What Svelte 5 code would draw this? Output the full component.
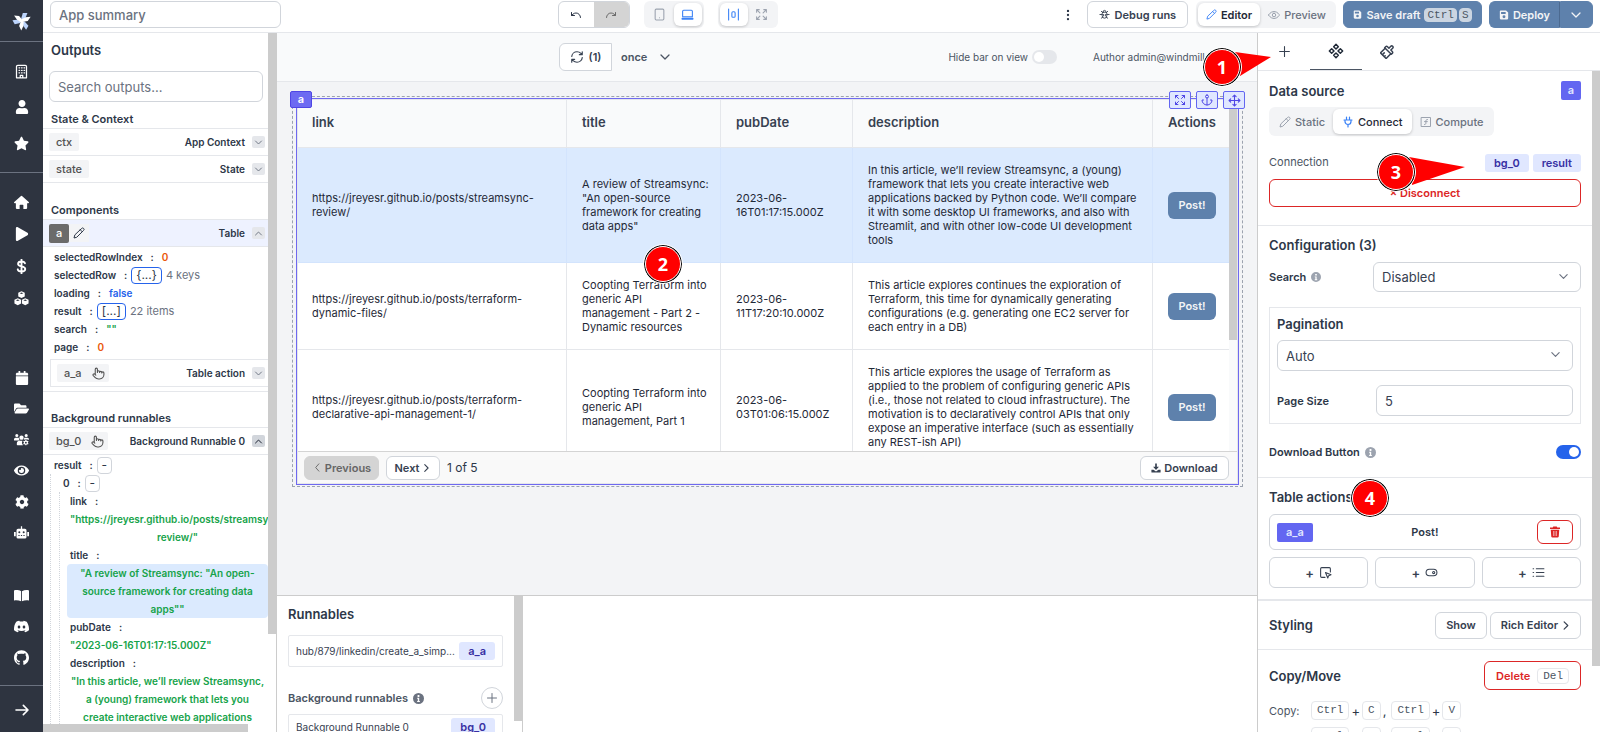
<script>
  const icons = {
    building: { d: 'M6 2h12a2 2 0 0 1 2 2v18h-6v-4h-4v4H4V4a2 2 0 0 1 2-2ZM4 22h16M8 6h1M12 6h1M16 6h1M8 10h1M12 10h1M16 10h1M8 14h1M12 14h1M16 14h1' },
    user: { vb: '0 0 448 512', f: 1, d: 'M224 256c70.7 0 128-57.3 128-128S294.7 0 224 0 96 57.3 96 128s57.3 128 128 128zm89.6 32h-16.7c-22.2 10.2-46.9 16-72.9 16s-50.6-5.8-72.9-16h-16.7C60.2 288 0 348.2 0 422.4V464c0 26.5 21.5 48 48 48h352c26.5 0 48-21.5 48-48v-41.6c0-74.2-60.2-134.4-134.4-134.4z' },
    star: { vb: '0 0 576 512', f: 1, d: 'M259.3 17.8L194 150.2 47.9 171.5c-26.2 3.8-36.7 36.1-17.7 54.6l105.7 103-25 145.5c-4.5 26.3 23.2 46 46.4 33.7L288 439.6l130.7 68.7c23.2 12.2 50.9-7.4 46.4-33.7l-25-145.5 105.7-103c19-18.5 8.5-50.8-17.7-54.6L382 150.2 316.7 17.8c-11.7-23.6-45.6-23.9-57.4 0z' },
    home: { f: 1, d: 'M11.2 1.5a1.2 1.2 0 0 1 1.6 0L23.6 11a1.2 1.2 0 0 1-.9 2.1H21v7.6a1.8 1.8 0 0 1-1.8 1.8H15v-6a1 1 0 0 0-1-1h-4a1 1 0 0 0-1 1v6H4.8A1.8 1.8 0 0 1 3 20.7v-7.6H1.3A1.2 1.2 0 0 1 .4 11Z' },
    play: { vb: '0 0 448 512', f: 1, d: 'M424.4 214.7L72.4 6.6C43.8-10.3 0 6.1 0 47.9V464c0 37.5 40.7 60.1 72.4 41.3l352-208c31.4-18.5 31.5-64.1 0-82.6z' },
    dollar: { w: 3, d: 'M12 1v22M17.5 7c-.4-2-2.5-3-5.5-3-3.2 0-5.5 1.3-5.5 4 0 5.2 11.5 2.6 11.5 8 0 2.8-2.6 4-6 4-3.4 0-5.7-1.3-6-3.5' },
    cubes: { f: 1, d: 'M12 .5l5.2 2.3v6L12 11.3 6.8 8.8v-6ZM12 2.3 9 3.6l3 1.3 3-1.3ZM6 11.5l5.3 2.4v6.2L6 22.7.7 20.1v-6.2ZM6 13.4l-3 1.3 3 1.3 3-1.3ZM18 11.5l5.3 2.4v6.2L18 22.7l-5.3-2.6v-6.2ZM18 13.4l-3 1.3 3 1.3 3-1.3Z' },
    calendar: { vb: '0 0 448 512', f: 1, d: 'M12 192h424c6.6 0 12 5.4 12 12v260c0 26.5-21.5 48-48 48H48c-26.5 0-48-21.5-48-48V204c0-6.6 5.4-12 12-12zm436-44v-36c0-26.5-21.5-48-48-48h-48V12c0-6.6-5.4-12-12-12h-40c-6.6 0-12 5.4-12 12v52H160V12c0-6.6-5.4-12-12-12h-40c-6.6 0-12 5.4-12 12v52H48C21.5 64 0 85.5 0 112v36c0 6.6 5.4 12 12 12h424c6.6 0 12-5.4 12-12z' },
    folder: { vb: '0 0 576 512', f: 1, d: 'M572.694 292.093L500.27 416.248A63.997 63.997 0 0 1 444.989 448H45.025c-18.523 0-30.064-20.093-20.731-36.093l72.424-124.155A64 64 0 0 1 152 256h399.964c18.523 0 30.064 20.093 20.73 36.093zM152 224h328v-48c0-26.51-21.49-48-48-48H272l-64-64H48C21.49 64 0 85.49 0 112v278.046l69.077-118.418C86.214 242.25 117.989 224 152 224z' },
    users: { f: 1, d: 'M4.5 3a2.5 2.5 0 1 1 0 5 2.5 2.5 0 0 1 0-5ZM19.5 3a2.5 2.5 0 1 1 0 5 2.5 2.5 0 0 1 0-5ZM12 5.5a3.5 3.5 0 1 1 0 7 3.5 3.5 0 0 1 0-7ZM2.5 9h4c.5 0 1 .1 1.4.4A5 5 0 0 0 9 13.5H.8A.8.8 0 0 1 0 12.7V11.5A2.5 2.5 0 0 1 2.5 9ZM17.5 9h4A2.5 2.5 0 0 1 24 11.5v1l-5-1-3.2.8c.5-.9.6-1.9.3-2.9.4-.3.9-.4 1.4-.4ZM9 14h4.5a6 6 0 0 0 .8 7H5.5a1 1 0 0 1-1-1v-1.5A4.5 4.5 0 0 1 9 14ZM18.2 12.5h1.6l.3 1.3 1 .6 1.3-.4.8 1.4-1 .9v1.2l1 .9-.8 1.4-1.3-.4-1 .6-.3 1.3h-1.6l-.3-1.3-1-.6-1.3.4-.8-1.4 1-.9v-1.2l-1-.9.8-1.4 1.3.4 1-.6ZM19 15.5a1.5 1.5 0 1 0 0 3 1.5 1.5 0 0 0 0-3Z' },
    eyeSolid: { vb: '0 0 576 512', f: 1, d: 'M572.52 241.4C518.29 135.59 410.93 64 288 64S57.68 135.64 3.48 241.41a32.35 32.35 0 0 0 0 29.19C57.71 376.41 165.07 448 288 448s230.32-71.64 284.52-177.41a32.35 32.35 0 0 0 0-29.19zM288 400a144 144 0 1 1 144-144 143.93 143.93 0 0 1-144 144zm0-240a95.31 95.31 0 0 0-25.31 3.79 47.85 47.85 0 0 1-66.9 66.9A95.78 95.78 0 1 0 288 160z' },
    gear: { vb: '0 0 512 512', f: 1, d: 'M487.4 315.7l-42.6-24.6c4.3-23.2 4.3-47 0-70.2l42.6-24.6c4.9-2.8 7.1-8.6 5.5-14-11.1-35.6-30-67.8-54.7-94.6-3.8-4.1-10-5.1-14.8-2.3L380.8 110c-17.9-15.4-38.5-27.3-60.8-35.1V25.8c0-5.6-3.9-10.5-9.4-11.7-36.7-8.2-74.3-7.8-109.2 0-5.5 1.2-9.4 6.1-9.4 11.7V75c-22.2 7.9-42.8 19.8-60.8 35.1L88.7 85.5c-4.9-2.8-11-1.9-14.8 2.3-24.7 26.7-43.6 58.9-54.7 94.6-1.7 5.4.6 11.2 5.5 14L67.3 221c-4.3 23.2-4.3 47 0 70.2l-42.6 24.6c-4.9 2.8-7.1 8.6-5.5 14 11.1 35.6 30 67.8 54.7 94.6 3.8 4.1 10 5.1 14.8 2.3l42.6-24.6c17.9 15.4 38.5 27.3 60.8 35.1v49.2c0 5.6 3.9 10.5 9.4 11.7 36.7 8.2 74.3 7.8 109.2 0 5.5-1.2 9.4-6.1 9.4-11.7v-49.2c22.2-7.9 42.8-19.8 60.8-35.1l42.6 24.6c4.9 2.8 11 1.9 14.8-2.3 24.7-26.7 43.6-58.9 54.7-94.6 1.5-5.5-.7-11.3-5.6-14.1zM256 336c-44.1 0-80-35.9-80-80s35.9-80 80-80 80 35.9 80 80-35.9 80-80 80z' },
    robot: { f: 1, d: 'M11 2h2v4h4.5A2.5 2.5 0 0 1 20 8.5V19a2.5 2.5 0 0 1-2.5 2.5h-11A2.5 2.5 0 0 1 4 19V8.5A2.5 2.5 0 0 1 6.5 6H11ZM0 11h2.8v7H0ZM21.2 11H24v7h-2.8ZM8.5 10a1.6 1.6 0 1 0 0 3.2 1.6 1.6 0 0 0 0-3.2ZM15.5 10a1.6 1.6 0 1 0 0 3.2 1.6 1.6 0 0 0 0-3.2ZM7 16v1.6h2V16ZM11 16v1.6h2V16ZM15 16v1.6h2V16Z' },
    book: { f: 1, d: 'M.8 3.5C4.5 3 8.5 3.5 11.3 5v16C8.5 19.8 4.5 19.5.8 19.8a.8.8 0 0 1-.8-.8V4.3c0-.4.4-.8.8-.8ZM23.2 3.5C19.5 3 15.5 3.5 12.7 5v16c2.8-1.2 6.8-1.5 10.5-1.2a.8.8 0 0 0 .8-.8V4.3c0-.4-.4-.8-.8-.8Z' },
    discord: { f: 1, d: 'M20.317 4.37a19.791 19.791 0 0 0-4.885-1.515.074.074 0 0 0-.079.037c-.211.375-.445.865-.608 1.25-1.845-.276-3.68-.276-5.487 0-.164-.393-.406-.874-.618-1.25a.077.077 0 0 0-.079-.037 19.736 19.736 0 0 0-4.885 1.515.07.07 0 0 0-.032.028C.533 9.046-.319 13.58.099 18.058a.082.082 0 0 0 .031.056c2.053 1.508 4.041 2.423 5.993 3.029a.078.078 0 0 0 .084-.028c.462-.63.873-1.295 1.226-1.994a.076.076 0 0 0-.042-.106c-.653-.248-1.274-.549-1.872-.892a.077.077 0 0 1-.008-.128c.126-.094.252-.192.372-.291a.074.074 0 0 1 .078-.01c3.928 1.793 8.18 1.793 12.061 0a.074.074 0 0 1 .079.01c.12.099.246.198.373.292a.077.077 0 0 1-.007.128 12.299 12.299 0 0 1-1.873.891.077.077 0 0 0-.041.107c.36.698.772 1.363 1.225 1.993a.076.076 0 0 0 .084.029c1.961-.607 3.95-1.522 6.002-3.029a.077.077 0 0 0 .031-.055c.5-5.177-.838-9.674-3.549-13.66a.061.061 0 0 0-.031-.029zM8.02 15.331c-1.183 0-2.157-1.086-2.157-2.419s.956-2.419 2.157-2.419c1.211 0 2.176 1.095 2.157 2.419 0 1.333-.956 2.419-2.157 2.419zm7.975 0c-1.183 0-2.157-1.086-2.157-2.419s.955-2.419 2.157-2.419c1.211 0 2.176 1.095 2.157 2.419 0 1.333-.946 2.419-2.157 2.419Z' },
    github: { f: 1, d: 'M12 .297c-6.63 0-12 5.373-12 12 0 5.303 3.438 9.8 8.205 11.385.6.113.82-.258.82-.577 0-.285-.01-1.04-.015-2.04-3.338.724-4.042-1.61-4.042-1.61C4.422 18.07 3.633 17.7 3.633 17.7c-1.087-.744.084-.729.084-.729 1.205.084 1.838 1.236 1.838 1.236 1.07 1.835 2.809 1.305 3.495.998.108-.776.417-1.305.76-1.605-2.665-.3-5.466-1.332-5.466-5.93 0-1.31.465-2.38 1.235-3.22-.135-.303-.54-1.523.105-3.176 0 0 1.005-.322 3.3 1.23.96-.267 1.98-.399 3-.405 1.02.006 2.04.138 3 .405 2.28-1.552 3.285-1.23 3.285-1.23.645 1.653.24 2.873.12 3.176.765.84 1.23 1.91 1.23 3.22 0 4.61-2.805 5.625-5.475 5.92.42.36.81 1.096.81 2.22 0 1.606-.015 2.896-.015 3.286 0 .315.21.69.825.57C20.565 22.092 24 17.592 24 12.297c0-6.627-5.373-12-12-12' },
    arrow: { w: 2.4, d: 'M3 12h18M14 5l7 7-7 7' },
    undo: { d: 'M3 7v6h6M21 17a9 9 0 0 0-9-9 9 9 0 0 0-6 2.3L3 13' },
    redo: { d: 'M21 7v6h-6M3 17a9 9 0 0 1 9-9 9 9 0 0 1 6 2.3L21 13' },
    tablet: { d: 'M6 2h12a2 2 0 0 1 2 2v16a2 2 0 0 1-2 2H6a2 2 0 0 1-2-2V4a2 2 0 0 1 2-2ZM12 18h.01' },
    laptop: { d: 'M5 4h14a2 2 0 0 1 2 2v10H3V6a2 2 0 0 1 2-2ZM2 19h20v1.5H2Z' },
    align: { d: 'M11 7h2a2 2 0 0 1 2 2v6a2 2 0 0 1-2 2h-2a2 2 0 0 1-2-2V9a2 2 0 0 1 2-2ZM3 22V2M21 22V2' },
    expand: { d: 'M21 21l-6-6M21 21v-4.8M21 21h-4.8M3 16.2V21h4.8M3 21l6-6M21 7.8V3h-4.8M21 3l-6 6M3 7.8V3h4.8M3 3l6 6' },
    dots: { f: 1, d: 'M12 3a2 2 0 1 1 0 4 2 2 0 0 1 0-4ZM12 10a2 2 0 1 1 0 4 2 2 0 0 1 0-4ZM12 17a2 2 0 1 1 0 4 2 2 0 0 1 0-4Z' },
    bug: { d: 'M9 7h6a2 2 0 0 1 2 2v6a5 5 0 0 1-10 0V9a2 2 0 0 1 2-2ZM9 7V6a3 3 0 0 1 6 0v1M19 5l-3 3M5 5l3 3M19 20l-3-2M5 20l3-2M2 12h5M17 12h5M10 12v3M14 12v3' },
    pencil: { d: 'M17 3a2.85 2.83 0 1 1 4 4L7.5 20.5 2 22l1.5-5.5ZM14.5 5.5l4 4' },
    eye: { d: 'M1 12s4-7 11-7 11 7 11 7-4 7-11 7-11-7-11-7ZM12 8.5a3.5 3.5 0 1 1 0 7 3.5 3.5 0 0 1 0-7Z' },
    save: { f: 1, d: 'M4 1h13l5 5v14a3 3 0 0 1-3 3H5a3 3 0 0 1-3-3V3a2 2 0 0 1 2-2ZM5 4.5v5h11v-5ZM12 12.5a3.5 3.5 0 1 0 0 7 3.5 3.5 0 0 0 0-7Z' },
    down: { d: 'M4 8l8 8 8-8', w: 2.5 },
    up: { d: 'M4 16l8-8 8 8', w: 2.5 },
    left: { d: 'M15 4l-7 8 7 8' },
    right: { d: 'M9 4l8 8-8 8', w: 2.6 },
    refresh: { d: 'M3 11a9 9 0 0 1 9-8 9.75 9.75 0 0 1 6.74 2.74L21 8M21 3v5h-5M21 13a9 9 0 0 1-9 8 9.75 9.75 0 0 1-6.74-2.74L3 16M8 16H3v5' },
    anchor: { d: 'M12 22V8M5 12H2a10 10 0 0 0 20 0h-3M12 2a3 3 0 1 1 0 6 3 3 0 0 1 0-6Z' },
    move: { d: 'M5 9l-3 3 3 3M9 5l3-3 3 3M15 19l-3 3-3-3M19 9l3 3-3 3M2 12h20M12 2v20' },
    plus: { d: 'M12 3v18M3 12h18' },
    component: { d: 'M5.5 8.5 9 12l-3.5 3.5L2 12ZM12 2l3.5 3.5L12 9 8.5 5.5ZM18.5 8.5 22 12l-3.5 3.5L15 12ZM12 15l3.5 3.5L12 22l-3.5-3.5Z', w: 2.2 },
    brush: { d: 'M14 19.9V16h3a2 2 0 0 0 2-2v-2H5v2c0 1.1.9 2 2 2h3v3.9a2 2 0 1 0 4 0ZM6 12V2h12v10M14 2v4M10 2v2', r: 225, w: 2.2 },
    plug: { d: 'M9 2v6M15 2v6M12 17v5M4 8h16M6 8h12v3a6 6 0 1 1-12 0Z', w: 2.4 },
    fn: { d: 'M3 3h18v18H3ZM9 17c2 0 2.8-1 2.8-2.8V10c0-2 1-3.3 3.2-3M9 11.2h5.7' },
    info: { f: 1, d: 'M12 0a12 12 0 1 1 0 24 12 12 0 0 1 0-24ZM10 4.5v4h4v-4ZM9 10.5v2h1.5v5H9v2h6v-2h-1.5v-7Z' },
    trash: { f: 1, d: 'M8.5 1h7l1 2H22v3H2V3h5.5ZM3.5 7.5h17l-1 13.5a2.5 2.5 0 0 1-2.5 2H7a2.5 2.5 0 0 1-2.5-2ZM8 10v10h1V10ZM11.5 10v10h1V10ZM15 10v10h1V10Z' },
    pointerBox: { d: 'M21 11V5a2 2 0 0 0-2-2H5a2 2 0 0 0-2 2v14c0 1.1.9 2 2 2h6M12 12l4.2 10.2 1.6-4.4 4.4-1.6Z' },
    toggle: { d: 'M8 6h8a6 6 0 0 1 0 12H8A6 6 0 0 1 8 6ZM16 10a2 2 0 1 1 0 4 2 2 0 0 1 0-4Z' },
    list: { d: 'M8 5h14M8 12h14M8 19h14M2 5h1M2 12h1M2 19h1' },
    hand: { d: 'M18 11v-1a2 2 0 0 0-4 0M14 10V9a2 2 0 0 0-4 0v1M10 9.5V4a2 2 0 0 0-4 0v10M18 11a2 2 0 1 1 4 0v3a8 8 0 0 1-8 8h-2c-2.8 0-4.5-.86-5.99-2.34l-3.6-3.6a2 2 0 0 1 2.83-2.82L7 15' },
    download: { f: 1, d: 'M10 1h4v8h5l-7 7.5L5 9h5ZM1 16h5l6 4.5L18 16h5v6a1 1 0 0 1-1 1H2a1 1 0 0 1-1-1Z' }
  };
  const nav = [
    ['workspace', [['building', 'Workspace'], ['user', 'User'], ['star', 'Favorites']]],
    ['main', [['home', 'Home'], ['play', 'Runs'], ['dollar', 'Variables'], ['cubes', 'Resources']]],
    ['manage', [['calendar', 'Schedules'], ['folder', 'Folders'], ['users', 'Groups'], ['eyeSolid', 'Audit logs'], ['gear', 'Settings'], ['robot', 'Workers']]],
    ['links', [['book', 'Docs'], ['discord', 'Discord'], ['github', 'GitHub']]]
  ];
  const rows = [
    { link: 'https://jreyesr.github.io/posts/streamsync-review/', title: 'A review of Streamsync: "An open-source framework for creating data apps"', date: '2023-06-16T01:17:15.000Z', desc: 'In this article, we’ll review Streamsync, a (young) framework that lets you create interactive web applications backed by Python code. We’ll compare it with some desktop UI frameworks, and also with Streamlit, and with other low-code UI development tools' },
    { link: 'https://jreyesr.github.io/posts/terraform-dynamic-files/', title: 'Coopting Terraform into generic API management - Part 2 - Dynamic resources', date: '2023-06-11T17:20:10.000Z', desc: 'This article explores continues the exploration of Terraform, this time for dynamically generating configurations (e.g. generating one EC2 server for each entry in a DB)' },
    { link: 'https://jreyesr.github.io/posts/terraform-declarative-api-management-1/', title: 'Coopting Terraform into generic API management, Part 1', date: '2023-06-03T01:06:15.000Z', desc: 'This article explores the usage of Terraform as applied to the problem of configuring generic APIs (i.e., those not related to cloud infrastructure). The motivation is to declaratively control APIs that only expose an imperative interface (such as essentially any REST-ish API)' }
  ];
  let hideBar = $state(false);
  let showDownload = $state(true);
</script>

{#snippet icon(name, size = 12)}
  {@const i = icons[name]}
  <svg class="icon" width={size} height={size} viewBox={i.vb ?? '0 0 24 24'} aria-hidden="true">
    <path d={i.d} fill={i.f ? 'currentColor' : 'none'} fill-rule="evenodd" stroke={i.f ? 'none' : 'currentColor'} stroke-width={i.w ?? 2} stroke-linecap="round" stroke-linejoin="round" transform={i.r ? `rotate(${i.r} 12 12)` : undefined} />
  </svg>
{/snippet}

{#snippet marker(n, cls, pointer)}
  <div class="marker {cls}">
    {#if pointer}<svg class="pointer" width="72" height="40" viewBox="0 0 72 40" aria-hidden="true"><polygon points={pointer} fill="#f00" /></svg>{/if}
    <span>{n}</span>
  </div>
{/snippet}

<div class="app">
  <nav class="side">
    <a class="logo" href="#home" aria-label="Windmill">
      <svg width="20" height="20" viewBox="0 0 24 24" aria-hidden="true">
        {#each [0, 120, 240] as a}
          <path transform="rotate({a} 12 12)" d="M11 9 13 2.5 18.5 2.5 16.5 7.5 12.5 11Z" fill="#bcd4fc" />
        {/each}
        {#each [0, 120, 240] as a}
          <path transform="rotate({a} 12 12)" d="M2.5 5.5 8.5 6 13 11.5 10.5 13.5 6 10.5Z" fill="#fff" />
        {/each}
      </svg>
    </a>
    {#each nav as [group, items]}
      <div class="group {group}">
        {#each items as [name, label]}
          <a href="#{name}" aria-label={label}>{@render icon(name, ['user', 'play', 'calendar', 'gear'].includes(name) ? 14 : 15)}</a>
        {/each}
      </div>
    {/each}
    <div class="group last"><a href="#expand" aria-label="Expand">{@render icon('arrow', 16)}</a></div>
  </nav>

  <div class="shell">
    <header class="top">
      <input class="summary" type="text" placeholder="App summary" aria-label="App summary" />
      <div class="mid">
        <div class="pair">
          <button aria-label="Undo">{@render icon('undo')}</button>
          <button class="off" aria-label="Redo">{@render icon('redo')}</button>
        </div>
        <div class="seg">
          <button aria-label="Mobile">{@render icon('tablet', 13)}</button>
          <button class="on blue" aria-label="Desktop">{@render icon('laptop', 13)}</button>
        </div>
        <div class="seg">
          <button class="on blue" aria-label="Centered">{@render icon('align', 13)}</button>
          <button aria-label="Full width">{@render icon('expand', 13)}</button>
        </div>
      </div>
      <div class="right">
        <button class="more" aria-label="More">{@render icon('dots', 14)}</button>
        <button class="btn debug">{@render icon('bug', 11)}Debug runs</button>
        <div class="seg mode">
          <button class="on"><i class="bluei">{@render icon('pencil', 11)}</i>Editor</button>
          <button><i>{@render icon('eye', 12)}</i>Preview</button>
        </div>
        <button class="btn solid save">{@render icon('save', 9)}Save draft <span class="keys"><kbd>Ctrl</kbd><kbd>S</kbd></span></button>
        <div class="deploy">
          <button class="btn solid">{@render icon('save', 10)}Deploy</button>
          <button class="btn solid" aria-label="Deploy options">{@render icon('down', 12)}</button>
        </div>
      </div>
    </header>

    <div class="panes">
      <aside class="outputs">
        <div class="scroll">
          <h2>Outputs</h2>
          <input class="search" type="text" placeholder="Search outputs..." aria-label="Search outputs" />
          <h3>State &amp; Context</h3>
          <div class="row"><span class="tag">ctx</span><b>App Context</b><button class="chev" aria-label="Expand ctx">{@render icon('down', 9)}</button></div>
          <div class="row"><span class="tag">state</span><b>State</b><button class="chev" aria-label="Expand state">{@render icon('down', 9)}</button></div>
          <h3 class="gap">Components</h3>
          <div class="row selected"><span class="tag dark">a</span><button class="edit" aria-label="Rename a">{@render icon('pencil', 12)}</button><b>Table</b><button class="chev" aria-label="Collapse a">{@render icon('up', 9)}</button></div>
          <div class="tree">
            <p>selectedRowIndex<i>:</i><span class="num">0</span></p>
            <p>selectedRow<i>:</i><button class="fold">{'{...}'}</button><small>4 keys</small></p>
            <p>loading<i>:</i><span class="bool">false</span></p>
            <p>result<i>:</i><button class="fold">[...]</button><small>22 items</small></p>
            <p>search<i>:</i><span class="str">""</span></p>
            <p>page<i>:</i><span class="num">0</span></p>
          </div>
          <div class="sub"><div class="row"><span class="tag wide">a_a {@render icon('hand', 13)}</span><b>Table action</b><button class="chev" aria-label="Expand a_a">{@render icon('down', 9)}</button></div></div>
          <h3 class="bg">Background runnables</h3>
          <div class="row"><span class="tag wide">bg_0 {@render icon('hand', 13)}</span><b>Background Runnable 0</b><button class="chev strong" aria-label="Collapse bg_0">{@render icon('up', 9)}</button></div>
          <div class="tree">
            <p>result<i>:</i><button class="fold dash">-</button></p>
            <div class="lvl">
              <p>0<i>:</i><button class="fold dash">-</button></p>
              <div class="lvl two">
                <p>link<i>:</i></p>
                <p class="str over">"https://jreyesr.github.io/posts/streamsync-<br />review/"</p>
                <p>title<i>:</i></p>
                <p class="str hit">"A review of Streamsync: "An open-source framework for creating data apps""</p>
                <p>pubDate<i>:</i></p>
                <p class="str date">"2023-06-16T01:17:15.000Z"</p>
                <p>description<i>:</i></p>
                <p class="str">"In this article, we’ll review Streamsync, a (young) framework that lets you create interactive web applications</p>
              </div>
            </div>
          </div>
        </div>
        <div class="vbar"></div>
        <div class="hbar"></div>
      </aside>

      <main>
        <section class="canvas">
          <div class="bar">
            <div class="refresh"><button class="btn">{@render icon('refresh', 14)}(1)</button><button class="once">once {@render icon('down', 12)}</button></div>
            <div class="meta">
              <label>Hide bar on view <input class="switch" type="checkbox" bind:checked={hideBar} /></label>
              <span>Author admin@windmill.dev</span>
            </div>
          </div>
          <div class="stage">
            <div class="frame">
              <span class="handle">a</span>
              <div class="tools">
                <button aria-label="Expand">{@render icon('expand', 12)}</button>
                <button aria-label="Anchor">{@render icon('anchor', 12)}</button>
                <button aria-label="Move">{@render icon('move', 13)}</button>
              </div>
              <div class="component">
                <div class="grid">
                  <div class="tablebox">
                    <table>
                      <colgroup><col class="c1" /><col class="c2" /><col class="c3" /><col class="c4" /><col class="c5" /></colgroup>
                      <thead><tr><th>link</th><th>title</th><th>pubDate</th><th>description</th><th>Actions</th></tr></thead>
                      <tbody>
                        {#each rows as r, n}
                          <tr class:active={n === 0}>
                            <td>{r.link}</td><td>{r.title}</td><td>{r.date}</td><td>{r.desc}</td>
                            <td><button class="post">Post!</button></td>
                          </tr>
                        {/each}
                      </tbody>
                    </table>
                  </div>
                  <div class="track"><div></div></div>
                </div>
                <footer>
                  <button class="btn prev" disabled>{@render icon('left', 11)}Previous</button>
                  <button class="btn next">Next{@render icon('right', 10)}</button>
                  <span>1 of 5</span>
                  <button class="btn dl">{@render icon('download', 10)}Download</button>
                </footer>
              </div>
            </div>
          </div>
        </section>
        <section class="bottom">
          <div class="runs">
            <h2>Runnables</h2>
            <button class="item"><span>hub/879/linkedin/create_a_simp...</span><em>a_a</em></button>
            <div class="bghead"><h3>Background runnables</h3>{@render icon('info', 11)}<button aria-label="Add background runnable">{@render icon('plus', 12)}</button></div>
            <button class="item second"><span>Background Runnable 0</span><em>bg_0</em></button>
          </div>
          <div class="runbar"><div></div></div>
        </section>
      </main>

      <aside class="settings">
        <div class="tabs">
          <button aria-label="Insert">{@render icon('plus', 13)}</button>
          <button class="active" aria-label="Settings">{@render icon('component', 16)}</button>
          <button aria-label="Styling">{@render icon('brush', 16)}</button>
        </div>
        <div class="body">
          <div class="props">
            <section>
              <div class="line head"><h2>Data source</h2><span class="id">a</span></div>
              <div class="seg source">
                <button><i>{@render icon('pencil', 12)}</i>Static</button>
                <button class="on"><i class="bluei">{@render icon('plug', 12)}</i>Connect</button>
                <button><i>{@render icon('fn', 12)}</i>Compute</button>
              </div>
              <div class="line conn"><span>Connection</span><div><em>bg_0</em><em>result</em></div></div>
              <button class="btn red">× Disconnect</button>
            </section>
            <section class="config">
              <h2>Configuration (3)</h2>
              <div class="line">
                <label for="search">Search {@render icon('info', 10)}</label>
                <div class="select"><select id="search"><option>Disabled</option></select>{@render icon('down', 11)}</div>
              </div>
              <div class="box">
                <label for="pagination" class="big">Pagination</label>
                <div class="select full"><select id="pagination"><option>Auto</option></select>{@render icon('down', 11)}</div>
                <div class="line"><label for="size">Page Size</label><input id="size" type="text" value="5" /></div>
              </div>
              <div class="line dlrow"><label for="dl">Download Button {@render icon('info', 11)}</label><input id="dl" class="switch" type="checkbox" bind:checked={showDownload} /></div>
            </section>
            <section class="actions">
              <h2>Table actions</h2>
              <div class="action"><span class="id">a_a</span><b>Post!</b><button aria-label="Delete action">{@render icon('trash', 12)}</button></div>
              <div class="adds">
                <button class="btn" aria-label="Add button">+ {@render icon('pointerBox', 13)}</button>
                <button class="btn" aria-label="Add toggle">+ {@render icon('toggle', 13)}</button>
                <button class="btn" aria-label="Add select">+ {@render icon('list', 13)}</button>
              </div>
            </section>
            <section class="styling">
              <h2>Styling</h2>
              <div><button class="btn">Show</button><button class="btn">Rich Editor {@render icon('right', 11)}</button></div>
            </section>
            <section class="copy">
              <div class="line"><h2>Copy/Move</h2><button class="btn red">Delete <kbd>Del</kbd></button></div>
              <p><span>Copy:</span><kbd>Ctrl</kbd>+<kbd>C</kbd>,<kbd class="k2">Ctrl</kbd>+<kbd>V</kbd></p>
              <p><span>Move:</span><kbd>Ctrl</kbd>+<kbd>X</kbd>,<kbd class="k2">Ctrl</kbd>+<kbd>V</kbd></p>
            </section>
          </div>
          <div class="track"><div></div></div>
        </div>
      </aside>
    </div>
  </div>

  {@render marker(1, 'm1', '13,3 49,8 18,27')}
  {@render marker(2, 'm2')}
  {@render marker(3, 'm3', '13,3 69,13 16,31')}
  {@render marker(4, 'm4')}
</div>

<style>
  :global(body) { background: #fff; }
  .app, .app :global(*) { box-sizing: border-box; }
  .app { position: relative; display: flex; height: 100vh; overflow: hidden; font: 11px/14px Inter, "Liberation Sans", sans-serif; color: #2d3748; }
  h2, h3, p { margin: 0; }
  h2 { font-size: 13px; line-height: 18px; font-weight: 600; }
  h3 { font-size: 11px; line-height: 16px; font-weight: 600; }
  i, em { font-style: normal; }
  button, input, select { font: inherit; color: inherit; margin: 0; }
  button { display: inline-flex; align-items: center; justify-content: center; padding: 0; border: 0; background: none; white-space: nowrap; cursor: pointer; }
  .icon { display: block; flex: none; }
  b { font-weight: 600; }
  .btn { gap: 5px; border: 1px solid #d1d5db; border-radius: 6px; background: #fff; font-weight: 600; color: #374151; }

  .side { flex: none; width: 43px; background: #2e3440; color: #fff; display: flex; flex-direction: column; }
  .side a { color: inherit; display: flex; align-items: center; justify-content: center; }
  .logo { height: 42px; border-bottom: 1px solid #6b7280; }
  .group { display: flex; flex-direction: column; }
  .group a { height: 32px; }
  .group.workspace { padding: 11px 0; border-bottom: 1px solid #6b7280; }
  .group.workspace a { height: 36px; }
  .group.main { padding-top: 13px; }
  .group.manage { margin-top: 48px; }
  .group.manage a, .group.links a { height: 31px; }
  .group.links { margin-top: auto; padding-bottom: 12px; }
  .group.last { border-top: 1px solid #6b7280; padding: 8px 0 6px; }

  .shell { flex: 1; min-width: 0; display: flex; flex-direction: column; }
  .top { flex: none; height: 33px; border-bottom: 1px solid #e5e7eb; display: flex; align-items: center; padding: 0 7px 3px; }
  input { outline: 0; }
  .summary { width: 231px; height: 27px; border: 1px solid #d1d5db; border-radius: 6px; padding: 0 8px; font-size: 13px; font-weight: 500; }
  .summary::placeholder, .search::placeholder { color: #6b7280; opacity: 1; }
  .mid { display: flex; gap: 14px; margin: 0 7px 0 auto; }
  .right { display: flex; align-items: center; margin-left: auto; }
  .pair { display: flex; height: 27px; border: 1px solid #d1d5db; border-radius: 6px; overflow: hidden; }
  .pair button { width: 35px; }
  .pair .off { background: #d4d4d4; color: #6b6b6b; }
  .seg { display: flex; align-items: center; padding: 2px; height: 27px; border-radius: 6px; background: #f3f4f6; }
  .seg button { height: 100%; min-width: 28px; gap: 4px; border-radius: 6px; font-weight: 500; color: #6b7280; }
  .seg i, .seg .icon { color: #9ca3af; }
  .seg button.on { background: #fff; box-shadow: 0 1px 3px #0003; color: #1f2937; }
  .seg .blue .icon, .seg .bluei .icon, .seg .bluei { color: #3b82f6; }
  .more { width: 12px; margin-right: 13px; }
  .debug { height: 27px; width: 101px; margin-right: 8px; }
  .mode { margin-right: 7px; }
  .mode button { padding: 0 8px; }
  .mode button.on { font-weight: 600; }
  .btn.solid { height: 27px; gap: 4px; background: #5e81ac; border-color: #5e81ac; color: #f3f4f6; }
  .save { width: 139px; margin-right: 7px; }
  .keys { display: flex; gap: 2px; }
  .keys kbd { background: #cbd5e1; color: #4b5563; border-color: #cbd5e1; height: 14px; line-height: 12px; padding: 0 2px; }
  kbd { display: inline-block; font: 11px/16px "Liberation Mono", monospace; border: 1px solid #e5e7eb; border-radius: 4px; color: #4b5563; background: #fff; }
  .deploy { display: flex; }
  .deploy button:first-child { width: 71px; border-radius: 6px 0 0 6px; border-right-color: #4c6a90; }
  .deploy button:last-child { width: 33px; border-radius: 0 6px 6px 0; }

  .panes { flex: 1; min-height: 0; display: flex; }
  .outputs { flex: none; width: 234px; position: relative; border-right: 1px solid #ccc; overflow: hidden; }
  .scroll { width: 225px; padding-top: 8px; }
  .scroll h2 { padding: 0 8px; }
  .search { display: block; width: calc(100% - 11px); height: 31px; margin: 12px 5px 0 6px; border: 1px solid #d1d5db; border-radius: 6px; padding: 0 8px; font-size: 13px; }
  .scroll h3 { padding: 9px 8px 1px; border-bottom: 1px solid #e5e7eb; }
  .scroll h3.gap { padding-top: 19px; }
  .row { display: flex; align-items: center; height: 27px; padding: 0 3px 0 6px; border-bottom: 1px solid #e5e7eb; }
  .row b { margin-left: auto; font-size: 10px; }
  .row.selected { background: #eef2ff; }
  .tag { height: 18px; padding: 2px 7px; border-radius: 2px; background: #f3f4f6; color: #525252; font-weight: 500; display: flex; align-items: center; }
  .tag.wide { gap: 10px; padding-right: 4px; }
  .tag.dark { background: #6b6b6b; color: #fff; height: 19px; }
  .edit { width: 20px; height: 18px; background: #f3f4f6; }
  .chev { width: 13px; height: 12px; margin-left: 7px; border-radius: 2px; background: #e5e7eb; color: #6b7280; }
  .chev.strong { background: #d1d5db; color: #111827; }
  .tree { padding: 1px 0 3px 11px; font-size: 10px; line-height: 18px; font-weight: 600; }
  .tree p { min-height: 18px; display: flex; align-items: center; }
  .tree p i { margin: 0 8px; }
  .tree .num { color: #ea580c; }
  .tree .bool { color: #2563eb; }
  .tree .str { color: #16a34a; }
  .fold { height: 17px; padding: 0 4px; margin-left: -4px; border: 1px solid #2563eb; border-radius: 4px; font-size: 12px; font-weight: 400; }
  .fold.dash { width: 15px; border-color: #d1d5db; }
  .tree small { font-size: 11px; font-weight: 400; color: #6b7280; margin-left: 4px; }
  .sub { margin-left: 7px; border: 1px solid #e5e7eb; border-right: 0; }
  .sub .row { border: 0; height: 26px; }
  .scroll h3.bg { margin-top: 4px; border-top: 1px solid #e5e7eb; padding-top: 18px; }
  .lvl { margin-left: -4px; padding-left: 12px; border-left: 1px dotted #d1d5db; }
  .lvl.two { padding-left: 7px; }
  .two p { padding: 0 3px; }
  .two p.str { display: block; text-align: center; }
  .two p.over { white-space: nowrap; width: 221px; }
  .two p.date { text-align: left; }
  .two p.hit { background: #dbeafe; border-radius: 4px; }
  .vbar { position: absolute; top: 0; right: 0; width: 8px; height: 86%; background: #ccc; }
  .hbar { position: absolute; left: 0; right: 0; bottom: 0; height: 8px; background: linear-gradient(90deg, #ccc 205px, #fff 205px); }

  main { flex: 1; min-width: 0; display: flex; flex-direction: column; }
  .canvas { flex: 1; background: #f3f4f6; min-height: 0; }
  .bar { height: 49px; background: #f9fafb; border-bottom: 1px solid #e5e7eb; display: flex; align-items: center; color: #4b5563; }
  .refresh { margin: 0 auto 0 282px; display: flex; }
  .refresh .btn { width: 53px; height: 28px; border-radius: 6px 0 0 6px; }
  .once { gap: 12px; padding: 0 9px; font-weight: 600; color: #4b5563; }
  .meta { display: flex; align-items: center; gap: 36px; margin-right: 32px; font-size: 10px; }
  .meta label { display: flex; align-items: center; gap: 4px; }
  .switch { appearance: none; width: 25px; height: 14px; border-radius: 7px; background: #e5e7eb; padding: 2px; display: flex; }
  .switch::before { content: ""; width: 10px; height: 10px; border-radius: 5px; background: #fff; }
  .switch:checked { background: #2563eb; justify-content: flex-end; }
  .stage { padding: 14px 14px 0 15px; }
  .frame { position: relative; border: 1px dashed #9ca3af; padding: 1px 3px; }
  .handle { position: absolute; left: -3px; top: -6px; width: 22px; height: 17px; text-align: center; background: #6d6af2; border: 1px solid #4f46e5; line-height: 15px; border-radius: 2px; color: #fff; font-weight: 600; }
  .tools { position: absolute; right: -3px; top: -6px; display: flex; gap: 5px; }
  .tools button { width: 22px; height: 18px; background: #e0e7ff; border: 1px solid #6366f1; border-radius: 2px; color: #4f46e5; }
  .component { border: 1px solid #6f69f0; background: #e5e7eb; padding: 1px; }
  .grid { display: flex; height: 351px; background: #fff; }
  .tablebox { flex: 1; overflow: hidden; }
  table { width: 100%; border-collapse: separate; border-spacing: 0; table-layout: fixed; color: #1f2937; }
  .c1 { width: 269px; } .c2 { width: 154px; } .c3 { width: 132px; } .c4 { width: 300px; } .c5 { width: 76px; }
  th { height: 48px; padding: 0 10px 3px 15px; text-align: left; font-size: 13px; font-weight: 600; color: #374151; background: #f9fafb; }
  th, td { border-right: 1px solid #e5e7eb; border-bottom: 1px solid #e5e7eb; }
  td { padding: 15px 10px 15px 15px; }
  th:last-child, td:last-child { border-right: 0; padding-right: 0; }
  th:first-child, td:first-child { padding-left: 14px; }
  tr.active td { background: #dbeafe; border-color: #d3e4fd; }
  .post { width: 48px; height: 27px; background: #5e81ac; color: #f3f4f6; border-radius: 6px; font-weight: 600; }
  .grid .track { width: 8px; background: #f9fafb; }
  .grid .track div { height: 240px; background: #ccc; }
  footer { height: 32px; border-top: 1px solid #d4d4d4; background: #f9f9f9; display: flex; align-items: center; gap: 7px; padding: 0 8px 0 6px; }
  footer .btn { height: 24px; }
  footer span { font-size: 12px; }
  .prev { width: 75px; background: #d4d4d4; border-color: #d4d4d4; color: #666; gap: 2px; }
  .next { width: 54px; gap: 2px; }
  .dl { width: 89px; margin-left: auto; gap: 3px; }

  .bottom { height: 137px; flex: none; border-top: 1px solid #ccc; display: flex; overflow: hidden; background: #fff; }
  .runs { width: 237px; padding: 9px 11px; }
  .item { width: 100%; height: 32px; margin-top: 12px; padding: 0 7px; border: 1px solid #e5e7eb; border-radius: 2px; gap: 2px; justify-content: space-between; color: #374151; font-size: 10px; }
  em { padding: 2px 9px; border-radius: 3px; background: #e0e7ff; color: #3730a3; font-weight: 600; font-size: 11px; }
  .bghead { display: flex; align-items: center; gap: 5px; margin-top: 20px; color: #4b5563; }
  .bghead .icon { color: #6b7280; }
  .bghead button { margin-left: auto; width: 22px; height: 22px; border: 1px solid #d1d5db; border-radius: 50%; color: #6b7280; }
  .item.second { margin-top: 5px; height: 26px; }
  .runbar { width: 9px; border-right: 1px solid #ccc; }
  .runbar div { height: 125px; background: #ccc; }

  .settings { flex: none; width: 343px; border-left: 1px solid #ccc; display: flex; flex-direction: column; min-height: 0; }
  .tabs { flex: none; display: flex; height: 38px; border-bottom: 1px solid #e5e7eb; }
  .tabs button { width: 52px; border-bottom: 1px solid transparent; color: #374151; }
  .tabs .active { border-color: #4b5563; color: #1f2937; }
  .body { flex: 1; min-height: 0; display: flex; }
  .props { flex: 1; overflow: hidden; }
  .body .track { width: 8px; }
  .body .track div { background: #ccc; height: 90%; }
  .props section { padding: 0 11px; border-bottom: 1px solid #e5e7eb; }
  .line { display: flex; align-items: center; justify-content: space-between; }
  .head { padding-top: 10px; }
  .id { background: #6366f1; color: #e0e7ff; padding: 2px 7px; height: 19px; border-radius: 2px; font-weight: 600; }
  .action .id { padding: 2px 9px; }
  .source { display: inline-flex; height: 29px; margin-top: 7px; }
  .source button { padding: 0 9px; height: 25px; gap: 4px; }
  .source button:first-child, .source button:last-child { padding: 0 8px; }
  .conn { margin: 15px 0 7px; color: #4b5563; }
  .conn div { display: flex; gap: 4px; margin-top: 3px; }
  .btn.red { border-color: #dc2626; color: #dc2626; }
  .props section > .red { width: 100%; height: 28px; margin-bottom: 18px; }
  .config h2 { padding-top: 10px; }
  .config .line { margin-top: 8px; }
  .config label { display: flex; align-items: center; gap: 5px; font-weight: 600; }
  .config label .icon { color: #9ca3af; }
  .config .big { font-size: 13px; line-height: 18px; }
  .select { position: relative; width: 208px; height: 30px; }
  .select select, .box input { width: 100%; height: 100%; appearance: none; background: #fff; border: 1px solid #d1d5db; border-radius: 6px; padding: 0 8px; font-size: 13px; color: #374151; }
  .select .icon { position: absolute; right: 12px; top: 9px; color: #6b7280; }
  .box { border: 1px solid #e5e7eb; margin-top: 15px; padding: 7px; }
  .select.full { width: 100%; height: 31px; margin-top: 7px; }
  .box .line { margin-top: 14px; }
  .box .line input { width: 197px; height: 31px; }
  .config .dlrow { margin: 21px 0 18px; }
  .actions h2 { padding-top: 10px; }
  .action { display: flex; align-items: center; justify-content: space-between; height: 36px; margin-top: 8px; border: 1px solid #d1d5db; border-radius: 6px; padding: 0 7px; }
  .action button { width: 36px; height: 24px; border: 1px solid #dc2626; border-radius: 6px; color: #dc2626; }
  .adds { display: grid; grid-template-columns: repeat(3, 1fr); gap: 7px; margin: 7px 0 11px; }
  .adds .btn { height: 31px; font-size: 13px; }
  .props .actions { border-bottom-width: 2px; }
  .styling { display: flex; align-items: center; justify-content: space-between; height: 49px; }
  .styling div { display: flex; gap: 3px; }
  .styling .btn { height: 27px; padding: 0 10px; }
  .styling .btn:last-child { gap: 2px; padding-right: 9px; }
  .copy .line { padding-top: 11px; }
  .copy .red { height: 29px; padding: 0 11px; gap: 7px; }
  .copy .red kbd { padding: 0 5px; font-weight: 400; line-height: 14px; }
  .copy p { display: flex; align-items: center; margin-top: 11px; gap: 2px; font-size: 13px; height: 19px; }
  .copy p + p { margin-top: 7px; }
  .copy p span { width: 40px; font-size: 11px; color: #4b5563; }
  .copy p kbd { padding: 0 5px; height: 19px; }
  .copy .k2 { margin-left: 3px; }

  .marker { position: absolute; width: 36px; height: 36px; }
  .marker span { position: relative; display: block; width: 36px; height: 36px; border-radius: 50%; background: #f00; border: 1px solid #fff; box-shadow: 0 0 0 1px #000; outline: 1px solid #fff; outline-offset: 1px; color: #fff; font: bold 18px/34px "Noto Sans", sans-serif; text-align: center; }
  .pointer { position: absolute; left: 18px; top: 0; }
  .m1 { right: 360px; top: 49px; }
  .m2 { left: 645px; top: 246px; }
  .m3 { right: 186px; top: 154px; }
  .m4 { right: 212px; top: 480px; }
</style>
